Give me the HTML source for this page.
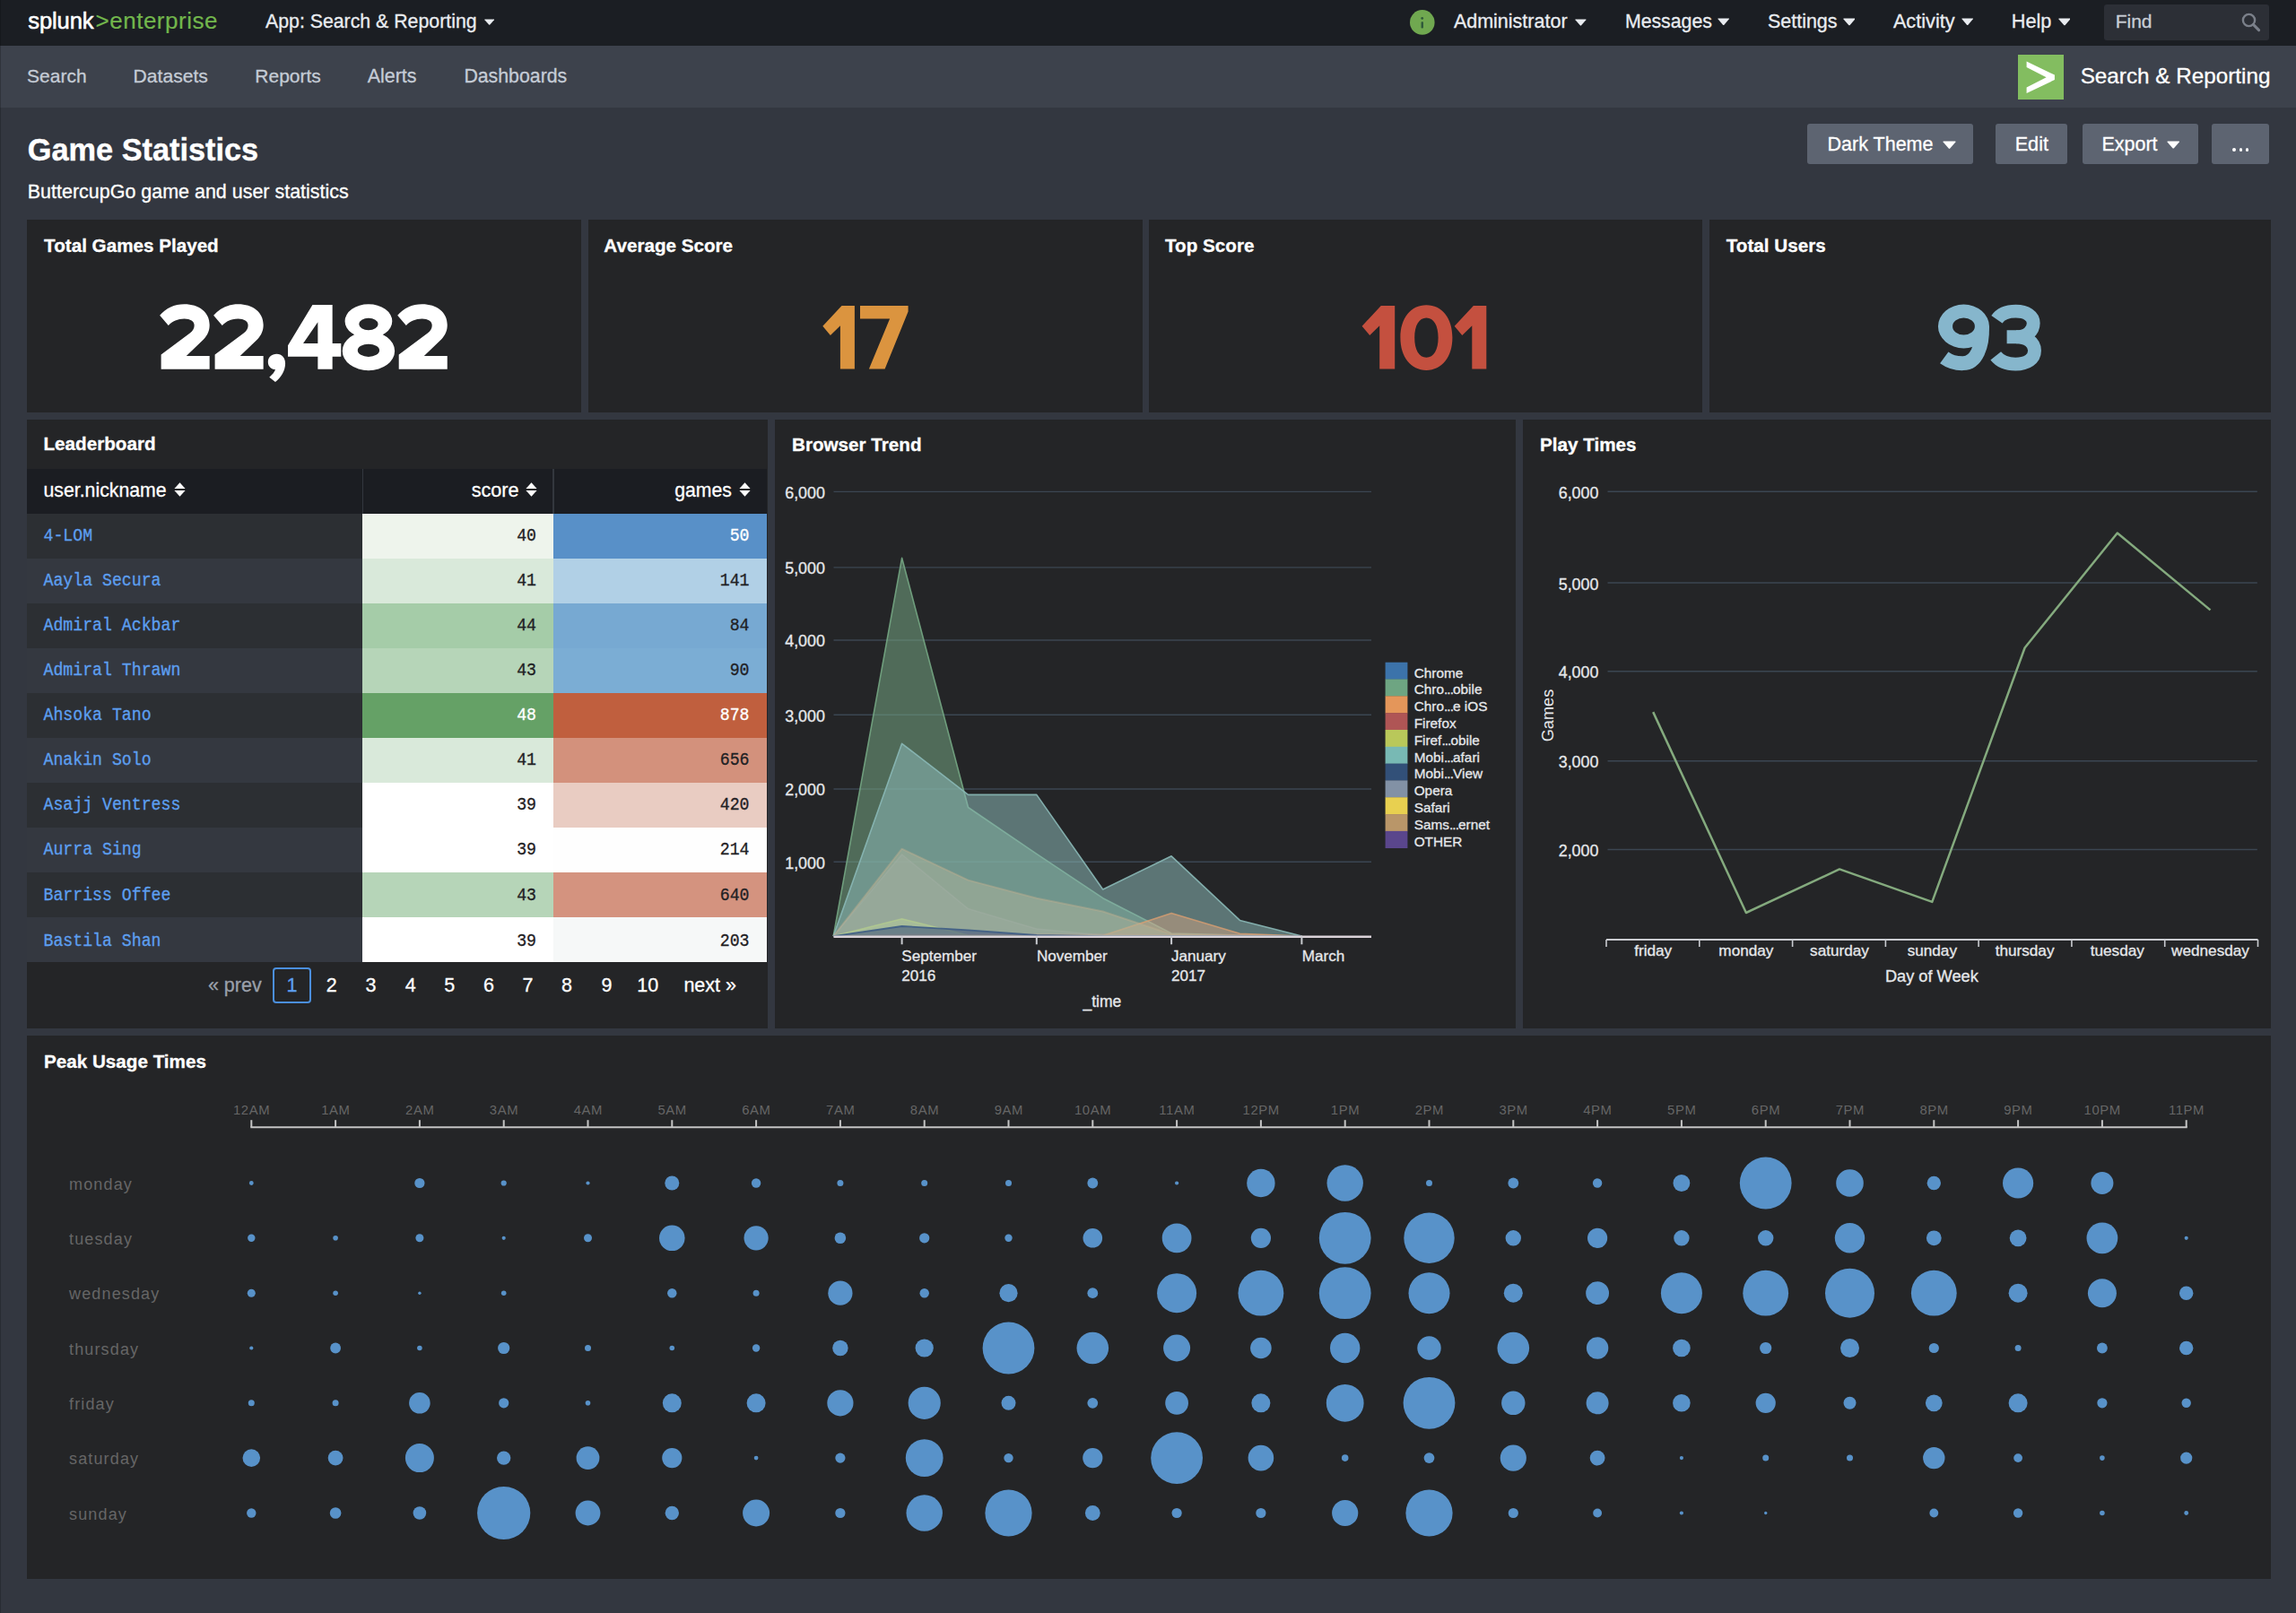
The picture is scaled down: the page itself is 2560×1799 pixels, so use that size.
<!DOCTYPE html>
<html><head><meta charset="utf-8"><title>Game Statistics</title>
<style>
html,body{margin:0;padding:0}
body{width:2560px;height:1799px;background:#333740;position:relative;overflow:hidden;font-family:"Liberation Sans", sans-serif;}
div{box-sizing:border-box}
</style></head><body>
<div style="position:absolute;left:0.0px;top:0.0px;width:2560.0px;height:51.0px;background:#1b1e23;"></div>
<div style="position:absolute;left:0.0px;top:51.0px;width:2560.0px;height:69.2px;background:#3d424c;"></div>
<div style="position:absolute;left:0.0px;top:0.0px;width:1.0px;height:1799.0px;background:rgba(0,0,0,0.2);"></div>
<div style="position:absolute;left:31.2px;top:6px;line-height:34px;font-size:26px;white-space:nowrap;letter-spacing:0.5px"><span style="color:#fff;font-size:25.6px;letter-spacing:-0.1px;-webkit-text-stroke:0.55px #fff">splunk</span><span style="color:#72b64c;margin-left:2px;-webkit-text-stroke:0.2px #72b64c">&gt;enterprise</span></div>
<div style="position:absolute;top:9.6px;line-height:28px;font-size:21.3px;color:#e9ecf0;white-space:nowrap;left:296.0px;-webkit-text-stroke:0.3px #e9ecf0;">App: Search &amp; Reporting</div>
<svg style="position:absolute;left:540.1px;top:21.1px" width="11.4" height="7.1" viewBox="0 0 10 6.2"><path d="M0.6 0.4 H9.4 Q10 0.4 9.6 1 L5.5 5.7 Q5 6.2 4.5 5.7 L0.4 1 Q0 0.4 0.6 0.4Z" fill="#e9ecf0"/></svg>
<svg style="position:absolute;left:1572.4px;top:10.5px" width="28" height="28" viewBox="0 0 28 28"><circle cx="13.8" cy="13.9" r="13.8" fill="#70a850"/><rect x="12.5" y="13.2" width="2.5" height="7.4" rx="0.8" fill="#2f5a3a"/><circle cx="13.7" cy="9.4" r="1.4" fill="#2f5a3a"/></svg>
<div style="position:absolute;top:9.6px;line-height:28px;font-size:21.5px;color:#e9ecf0;white-space:nowrap;left:1620.9px;-webkit-text-stroke:0.3px #e9ecf0;">Administrator</div>
<svg style="position:absolute;left:1756.1px;top:20.6px" width="12.9" height="8.0" viewBox="0 0 10 6.2"><path d="M0.6 0.4 H9.4 Q10 0.4 9.6 1 L5.5 5.7 Q5 6.2 4.5 5.7 L0.4 1 Q0 0.4 0.6 0.4Z" fill="#e9ecf0"/></svg>
<div style="position:absolute;top:9.6px;line-height:28px;font-size:21.3px;color:#e9ecf0;white-space:nowrap;left:1811.9px;-webkit-text-stroke:0.3px #e9ecf0;">Messages</div>
<svg style="position:absolute;left:1914.7px;top:20.4px" width="13.4" height="8.3" viewBox="0 0 10 6.2"><path d="M0.6 0.4 H9.4 Q10 0.4 9.6 1 L5.5 5.7 Q5 6.2 4.5 5.7 L0.4 1 Q0 0.4 0.6 0.4Z" fill="#e9ecf0"/></svg>
<div style="position:absolute;top:9.6px;line-height:28px;font-size:21.5px;color:#e9ecf0;white-space:nowrap;left:1970.9px;-webkit-text-stroke:0.3px #e9ecf0;">Settings</div>
<svg style="position:absolute;left:2054.6px;top:20.3px" width="13.9" height="8.6" viewBox="0 0 10 6.2"><path d="M0.6 0.4 H9.4 Q10 0.4 9.6 1 L5.5 5.7 Q5 6.2 4.5 5.7 L0.4 1 Q0 0.4 0.6 0.4Z" fill="#e9ecf0"/></svg>
<div style="position:absolute;top:9.6px;line-height:28px;font-size:21.7px;color:#e9ecf0;white-space:nowrap;left:2110.9px;-webkit-text-stroke:0.3px #e9ecf0;">Activity</div>
<svg style="position:absolute;left:2187.0px;top:20.4px" width="13.4" height="8.3" viewBox="0 0 10 6.2"><path d="M0.6 0.4 H9.4 Q10 0.4 9.6 1 L5.5 5.7 Q5 6.2 4.5 5.7 L0.4 1 Q0 0.4 0.6 0.4Z" fill="#e9ecf0"/></svg>
<div style="position:absolute;top:9.6px;line-height:28px;font-size:21.7px;color:#e9ecf0;white-space:nowrap;left:2242.8px;-webkit-text-stroke:0.3px #e9ecf0;">Help</div>
<svg style="position:absolute;left:2294.5px;top:20.3px" width="13.9" height="8.6" viewBox="0 0 10 6.2"><path d="M0.6 0.4 H9.4 Q10 0.4 9.6 1 L5.5 5.7 Q5 6.2 4.5 5.7 L0.4 1 Q0 0.4 0.6 0.4Z" fill="#e9ecf0"/></svg>
<div style="position:absolute;left:2346.0px;top:4.5px;width:184.0px;height:40.0px;background:#2c2f36;border-radius:3px;"></div>
<div style="position:absolute;top:9.6px;line-height:28px;font-size:21.0px;color:#c9ced6;white-space:nowrap;left:2358.7px;-webkit-text-stroke:0.3px #c9ced6;">Find</div>
<svg style="position:absolute;left:2497px;top:12px" width="26" height="26" viewBox="0 0 26 26"><circle cx="10.5" cy="10.5" r="6.6" fill="none" stroke="#7b808a" stroke-width="2.4"/><path d="M15.4 15.4 L21.6 21.6" stroke="#7b808a" stroke-width="3" stroke-linecap="round"/></svg>
<div style="position:absolute;top:70.6px;line-height:28px;font-size:21.0px;color:#c5ccd6;white-space:nowrap;left:30.1px;-webkit-text-stroke:0.3px #c5ccd6;">Search</div>
<div style="position:absolute;top:70.6px;line-height:28px;font-size:21.1px;color:#c5ccd6;white-space:nowrap;left:148.6px;-webkit-text-stroke:0.3px #c5ccd6;">Datasets</div>
<div style="position:absolute;top:70.6px;line-height:28px;font-size:21.0px;color:#c5ccd6;white-space:nowrap;left:284.3px;-webkit-text-stroke:0.3px #c5ccd6;">Reports</div>
<div style="position:absolute;top:70.6px;line-height:28px;font-size:21.4px;color:#c5ccd6;white-space:nowrap;left:409.8px;-webkit-text-stroke:0.3px #c5ccd6;">Alerts</div>
<div style="position:absolute;top:70.6px;line-height:28px;font-size:21.3px;color:#c5ccd6;white-space:nowrap;left:517.4px;-webkit-text-stroke:0.3px #c5ccd6;">Dashboards</div>
<div style="position:absolute;left:2250.0px;top:60.9px;width:50.8px;height:50.3px;background:#83bd60;"></div>
<svg style="position:absolute;left:2250px;top:60.9px" width="51" height="51" viewBox="0 0 51 51"><path d="M9.6 7.6 L40.9 22.6 V28 L9.6 43 V36.6 L31.6 25.3 L9.6 14.1Z" fill="#fff"/></svg>
<div style="position:absolute;top:69.3px;line-height:32px;font-size:24.28px;color:#fff;white-space:nowrap;left:2319.7px;-webkit-text-stroke:0.3px #fff;">Search &amp; Reporting</div>
<div style="position:absolute;top:145.0px;line-height:44px;font-size:34.3px;color:#fff;white-space:nowrap;font-weight:bold;left:30.8px;-webkit-text-stroke:0.4px #fff;">Game Statistics</div>
<div style="position:absolute;top:199.5px;line-height:28px;font-size:21.47px;color:#fff;white-space:nowrap;left:30.8px;-webkit-text-stroke:0.3px #fff;">ButtercupGo game and user statistics</div>
<div style="position:absolute;left:2015.4px;top:137.5px;width:185.0px;height:45.7px;background:#5d6471;border-radius:3px;"></div>
<div style="position:absolute;left:2225.2px;top:137.5px;width:80.3px;height:45.7px;background:#5d6471;border-radius:3px;"></div>
<div style="position:absolute;left:2321.9px;top:137.5px;width:128.9px;height:45.7px;background:#5d6471;border-radius:3px;"></div>
<div style="position:absolute;left:2466.2px;top:137.5px;width:64.0px;height:45.7px;background:#5d6471;border-radius:3px;"></div>
<div style="position:absolute;top:146.5px;line-height:28px;font-size:21.5px;color:#fff;white-space:nowrap;left:2037.6px;-webkit-text-stroke:0.3px #fff;">Dark Theme</div>
<svg style="position:absolute;left:2165.7px;top:156.9px" width="15.0" height="9.3" viewBox="0 0 10 6.2"><path d="M0.6 0.4 H9.4 Q10 0.4 9.6 1 L5.5 5.7 Q5 6.2 4.5 5.7 L0.4 1 Q0 0.4 0.6 0.4Z" fill="#fff"/></svg>
<div style="position:absolute;top:146.5px;line-height:28px;font-size:21.64px;color:#fff;white-space:nowrap;left:2246.7px;-webkit-text-stroke:0.3px #fff;">Edit</div>
<div style="position:absolute;top:146.5px;line-height:28px;font-size:21.52px;color:#fff;white-space:nowrap;left:2343.4px;-webkit-text-stroke:0.3px #fff;">Export</div>
<svg style="position:absolute;left:2416.1px;top:157.0px" width="14.4" height="8.9" viewBox="0 0 10 6.2"><path d="M0.6 0.4 H9.4 Q10 0.4 9.6 1 L5.5 5.7 Q5 6.2 4.5 5.7 L0.4 1 Q0 0.4 0.6 0.4Z" fill="#fff"/></svg>
<div style="position:absolute;left:2489.3px;top:165.2px;width:3.8px;height:3.8px;border-radius:50%;background:#fff"></div>
<div style="position:absolute;left:2496.5px;top:165.2px;width:3.8px;height:3.8px;border-radius:50%;background:#fff"></div>
<div style="position:absolute;left:2503.7px;top:165.2px;width:3.8px;height:3.8px;border-radius:50%;background:#fff"></div>
<div style="position:absolute;left:30.0px;top:245.0px;width:618.1px;height:215.0px;background:#242527;"></div>
<div style="position:absolute;left:655.9px;top:245.0px;width:618.0px;height:215.0px;background:#242527;"></div>
<div style="position:absolute;left:1281.4px;top:245.0px;width:617.1px;height:215.0px;background:#242527;"></div>
<div style="position:absolute;left:1905.8px;top:245.0px;width:626.4px;height:215.0px;background:#242527;"></div>
<div style="position:absolute;left:30.0px;top:467.7px;width:826.2px;height:679.4px;background:#242527;"></div>
<div style="position:absolute;left:863.7px;top:467.7px;width:826.6px;height:679.4px;background:#242527;"></div>
<div style="position:absolute;left:1698.0px;top:467.7px;width:834.2px;height:679.4px;background:#242527;"></div>
<div style="position:absolute;left:30.0px;top:1155.1px;width:2502.2px;height:605.8px;background:#242527;"></div>
<div style="position:absolute;top:261.2px;line-height:26px;font-size:20.65px;color:#fff;white-space:nowrap;font-weight:bold;left:49.1px;-webkit-text-stroke:0.3px #fff;">Total Games Played</div>
<div style="position:absolute;top:261.2px;line-height:26px;font-size:20.65px;color:#fff;white-space:nowrap;font-weight:bold;left:673.3px;-webkit-text-stroke:0.3px #fff;">Average Score</div>
<div style="position:absolute;top:261.2px;line-height:26px;font-size:20.65px;color:#fff;white-space:nowrap;font-weight:bold;left:1299.0px;-webkit-text-stroke:0.3px #fff;">Top Score</div>
<div style="position:absolute;top:261.2px;line-height:26px;font-size:20.65px;color:#fff;white-space:nowrap;font-weight:bold;left:1924.8px;-webkit-text-stroke:0.3px #fff;">Total Users</div>
<div style="position:absolute;top:481.9px;line-height:26px;font-size:20.65px;color:#fff;white-space:nowrap;font-weight:bold;left:48.5px;-webkit-text-stroke:0.3px #fff;">Leaderboard</div>
<div style="position:absolute;top:483.0px;line-height:26px;font-size:20.65px;color:#fff;white-space:nowrap;font-weight:bold;left:883.0px;-webkit-text-stroke:0.3px #fff;">Browser Trend</div>
<div style="position:absolute;top:483.0px;line-height:26px;font-size:20.65px;color:#fff;white-space:nowrap;font-weight:bold;left:1717.0px;-webkit-text-stroke:0.3px #fff;">Play Times</div>
<div style="position:absolute;top:1170.5px;line-height:26px;font-size:20.65px;color:#fff;white-space:nowrap;font-weight:bold;left:49.0px;-webkit-text-stroke:0.3px #fff;">Peak Usage Times</div>
<div style="position:absolute;left:30.0px;top:523.0px;width:824.8px;height:49.6px;background:#1b1d22;"></div>
<div style="position:absolute;left:403.5px;top:523.0px;width:1.6px;height:49.6px;background:#33373e;"></div>
<div style="position:absolute;left:616.2px;top:523.0px;width:1.6px;height:49.6px;background:#33373e;"></div>
<div style="position:absolute;top:533.2px;line-height:28px;font-size:21.28px;color:#fff;white-space:nowrap;left:48.5px;-webkit-text-stroke:0.3px #fff;">user.nickname</div>
<svg style="position:absolute;left:194.0px;top:538.4px" width="13" height="16" viewBox="0 0 13 16"><path d="M6.5 0.2 L12.6 6.9 H0.4Z M6.5 15.8 L12.6 9.1 H0.4Z" fill="#fff"/></svg>
<div style="position:absolute;top:533.2px;line-height:28px;font-size:21.67px;color:#fff;white-space:nowrap;right:1981.4px;-webkit-text-stroke:0.3px #fff;">score</div>
<svg style="position:absolute;left:586.4px;top:538.4px" width="13" height="16" viewBox="0 0 13 16"><path d="M6.5 0.2 L12.6 6.9 H0.4Z M6.5 15.8 L12.6 9.1 H0.4Z" fill="#fff"/></svg>
<div style="position:absolute;top:533.2px;line-height:28px;font-size:21.19px;color:#fff;white-space:nowrap;right:1744.2px;-webkit-text-stroke:0.3px #fff;">games</div>
<svg style="position:absolute;left:824.0px;top:538.4px" width="13" height="16" viewBox="0 0 13 16"><path d="M6.5 0.2 L12.6 6.9 H0.4Z M6.5 15.8 L12.6 9.1 H0.4Z" fill="#fff"/></svg>
<div style="position:absolute;left:30.0px;top:572.6px;width:374.3px;height:50.3px;background:#2c2f33;"></div>
<div style="position:absolute;left:404.3px;top:572.6px;width:212.7px;height:50.3px;background:#eef4ec;"></div>
<div style="position:absolute;left:617.0px;top:572.6px;width:237.8px;height:50.3px;background:#5890c8;"></div>
<div style="position:absolute;top:586.2px;line-height:24px;font-size:18.21px;color:#5d9ff0;white-space:nowrap;font-family:'Liberation Mono', monospace;left:48.5px;-webkit-text-stroke:0.3px #5d9ff0;transform:scaleY(1.1);">4-LOM</div>
<div style="position:absolute;top:586.2px;line-height:24px;font-size:18.21px;color:#1f2124;white-space:nowrap;font-family:'Liberation Mono', monospace;right:1962.0px;-webkit-text-stroke:0.3px;transform:scaleY(1.1);">40</div>
<div style="position:absolute;top:586.2px;line-height:24px;font-size:18.21px;color:#fff;white-space:nowrap;font-family:'Liberation Mono', monospace;right:1724.5px;-webkit-text-stroke:0.3px;transform:scaleY(1.1);">50</div>
<div style="position:absolute;left:30.0px;top:622.6px;width:374.3px;height:50.3px;background:#343840;"></div>
<div style="position:absolute;left:404.3px;top:622.6px;width:212.7px;height:50.3px;background:#d9e9da;"></div>
<div style="position:absolute;left:617.0px;top:622.6px;width:237.8px;height:50.3px;background:#b1d0e6;"></div>
<div style="position:absolute;top:636.2px;line-height:24px;font-size:18.21px;color:#5d9ff0;white-space:nowrap;font-family:'Liberation Mono', monospace;left:48.5px;-webkit-text-stroke:0.3px #5d9ff0;transform:scaleY(1.1);">Aayla Secura</div>
<div style="position:absolute;top:636.2px;line-height:24px;font-size:18.21px;color:#1f2124;white-space:nowrap;font-family:'Liberation Mono', monospace;right:1962.0px;-webkit-text-stroke:0.3px;transform:scaleY(1.1);">41</div>
<div style="position:absolute;top:636.2px;line-height:24px;font-size:18.21px;color:#1f2124;white-space:nowrap;font-family:'Liberation Mono', monospace;right:1724.5px;-webkit-text-stroke:0.3px;transform:scaleY(1.1);">141</div>
<div style="position:absolute;left:30.0px;top:672.7px;width:374.3px;height:50.3px;background:#2c2f33;"></div>
<div style="position:absolute;left:404.3px;top:672.7px;width:212.7px;height:50.3px;background:#a5cca8;"></div>
<div style="position:absolute;left:617.0px;top:672.7px;width:237.8px;height:50.3px;background:#77a9d2;"></div>
<div style="position:absolute;top:686.3px;line-height:24px;font-size:18.21px;color:#5d9ff0;white-space:nowrap;font-family:'Liberation Mono', monospace;left:48.5px;-webkit-text-stroke:0.3px #5d9ff0;transform:scaleY(1.1);">Admiral Ackbar</div>
<div style="position:absolute;top:686.3px;line-height:24px;font-size:18.21px;color:#1f2124;white-space:nowrap;font-family:'Liberation Mono', monospace;right:1962.0px;-webkit-text-stroke:0.3px;transform:scaleY(1.1);">44</div>
<div style="position:absolute;top:686.3px;line-height:24px;font-size:18.21px;color:#1f2124;white-space:nowrap;font-family:'Liberation Mono', monospace;right:1724.5px;-webkit-text-stroke:0.3px;transform:scaleY(1.1);">84</div>
<div style="position:absolute;left:30.0px;top:722.7px;width:374.3px;height:50.3px;background:#343840;"></div>
<div style="position:absolute;left:404.3px;top:722.7px;width:212.7px;height:50.3px;background:#b6d5b8;"></div>
<div style="position:absolute;left:617.0px;top:722.7px;width:237.8px;height:50.3px;background:#7badd4;"></div>
<div style="position:absolute;top:736.3px;line-height:24px;font-size:18.21px;color:#5d9ff0;white-space:nowrap;font-family:'Liberation Mono', monospace;left:48.5px;-webkit-text-stroke:0.3px #5d9ff0;transform:scaleY(1.1);">Admiral Thrawn</div>
<div style="position:absolute;top:736.3px;line-height:24px;font-size:18.21px;color:#1f2124;white-space:nowrap;font-family:'Liberation Mono', monospace;right:1962.0px;-webkit-text-stroke:0.3px;transform:scaleY(1.1);">43</div>
<div style="position:absolute;top:736.3px;line-height:24px;font-size:18.21px;color:#1f2124;white-space:nowrap;font-family:'Liberation Mono', monospace;right:1724.5px;-webkit-text-stroke:0.3px;transform:scaleY(1.1);">90</div>
<div style="position:absolute;left:30.0px;top:772.7px;width:374.3px;height:50.3px;background:#2c2f33;"></div>
<div style="position:absolute;left:404.3px;top:772.7px;width:212.7px;height:50.3px;background:#65a166;"></div>
<div style="position:absolute;left:617.0px;top:772.7px;width:237.8px;height:50.3px;background:#c05f3e;"></div>
<div style="position:absolute;top:786.3px;line-height:24px;font-size:18.21px;color:#5d9ff0;white-space:nowrap;font-family:'Liberation Mono', monospace;left:48.5px;-webkit-text-stroke:0.3px #5d9ff0;transform:scaleY(1.1);">Ahsoka Tano</div>
<div style="position:absolute;top:786.3px;line-height:24px;font-size:18.21px;color:#fff;white-space:nowrap;font-family:'Liberation Mono', monospace;right:1962.0px;-webkit-text-stroke:0.3px;transform:scaleY(1.1);">48</div>
<div style="position:absolute;top:786.3px;line-height:24px;font-size:18.21px;color:#fff;white-space:nowrap;font-family:'Liberation Mono', monospace;right:1724.5px;-webkit-text-stroke:0.3px;transform:scaleY(1.1);">878</div>
<div style="position:absolute;left:30.0px;top:822.8px;width:374.3px;height:50.3px;background:#343840;"></div>
<div style="position:absolute;left:404.3px;top:822.8px;width:212.7px;height:50.3px;background:#d9e9da;"></div>
<div style="position:absolute;left:617.0px;top:822.8px;width:237.8px;height:50.3px;background:#d3917c;"></div>
<div style="position:absolute;top:836.4px;line-height:24px;font-size:18.21px;color:#5d9ff0;white-space:nowrap;font-family:'Liberation Mono', monospace;left:48.5px;-webkit-text-stroke:0.3px #5d9ff0;transform:scaleY(1.1);">Anakin Solo</div>
<div style="position:absolute;top:836.4px;line-height:24px;font-size:18.21px;color:#1f2124;white-space:nowrap;font-family:'Liberation Mono', monospace;right:1962.0px;-webkit-text-stroke:0.3px;transform:scaleY(1.1);">41</div>
<div style="position:absolute;top:836.4px;line-height:24px;font-size:18.21px;color:#1f2124;white-space:nowrap;font-family:'Liberation Mono', monospace;right:1724.5px;-webkit-text-stroke:0.3px;transform:scaleY(1.1);">656</div>
<div style="position:absolute;left:30.0px;top:872.8px;width:374.3px;height:50.3px;background:#2c2f33;"></div>
<div style="position:absolute;left:404.3px;top:872.8px;width:212.7px;height:50.3px;background:#ffffff;"></div>
<div style="position:absolute;left:617.0px;top:872.8px;width:237.8px;height:50.3px;background:#e9ccc2;"></div>
<div style="position:absolute;top:886.4px;line-height:24px;font-size:18.21px;color:#5d9ff0;white-space:nowrap;font-family:'Liberation Mono', monospace;left:48.5px;-webkit-text-stroke:0.3px #5d9ff0;transform:scaleY(1.1);">Asajj Ventress</div>
<div style="position:absolute;top:886.4px;line-height:24px;font-size:18.21px;color:#1f2124;white-space:nowrap;font-family:'Liberation Mono', monospace;right:1962.0px;-webkit-text-stroke:0.3px;transform:scaleY(1.1);">39</div>
<div style="position:absolute;top:886.4px;line-height:24px;font-size:18.21px;color:#1f2124;white-space:nowrap;font-family:'Liberation Mono', monospace;right:1724.5px;-webkit-text-stroke:0.3px;transform:scaleY(1.1);">420</div>
<div style="position:absolute;left:30.0px;top:922.8px;width:374.3px;height:50.3px;background:#343840;"></div>
<div style="position:absolute;left:404.3px;top:922.8px;width:212.7px;height:50.3px;background:#ffffff;"></div>
<div style="position:absolute;left:617.0px;top:922.8px;width:237.8px;height:50.3px;background:#fefefe;"></div>
<div style="position:absolute;top:936.4px;line-height:24px;font-size:18.21px;color:#5d9ff0;white-space:nowrap;font-family:'Liberation Mono', monospace;left:48.5px;-webkit-text-stroke:0.3px #5d9ff0;transform:scaleY(1.1);">Aurra Sing</div>
<div style="position:absolute;top:936.4px;line-height:24px;font-size:18.21px;color:#1f2124;white-space:nowrap;font-family:'Liberation Mono', monospace;right:1962.0px;-webkit-text-stroke:0.3px;transform:scaleY(1.1);">39</div>
<div style="position:absolute;top:936.4px;line-height:24px;font-size:18.21px;color:#1f2124;white-space:nowrap;font-family:'Liberation Mono', monospace;right:1724.5px;-webkit-text-stroke:0.3px;transform:scaleY(1.1);">214</div>
<div style="position:absolute;left:30.0px;top:972.8px;width:374.3px;height:50.3px;background:#2c2f33;"></div>
<div style="position:absolute;left:404.3px;top:972.8px;width:212.7px;height:50.3px;background:#b6d5b8;"></div>
<div style="position:absolute;left:617.0px;top:972.8px;width:237.8px;height:50.3px;background:#d4937f;"></div>
<div style="position:absolute;top:986.5px;line-height:24px;font-size:18.21px;color:#5d9ff0;white-space:nowrap;font-family:'Liberation Mono', monospace;left:48.5px;-webkit-text-stroke:0.3px #5d9ff0;transform:scaleY(1.1);">Barriss Offee</div>
<div style="position:absolute;top:986.5px;line-height:24px;font-size:18.21px;color:#1f2124;white-space:nowrap;font-family:'Liberation Mono', monospace;right:1962.0px;-webkit-text-stroke:0.3px;transform:scaleY(1.1);">43</div>
<div style="position:absolute;top:986.5px;line-height:24px;font-size:18.21px;color:#1f2124;white-space:nowrap;font-family:'Liberation Mono', monospace;right:1724.5px;-webkit-text-stroke:0.3px;transform:scaleY(1.1);">640</div>
<div style="position:absolute;left:30.0px;top:1022.9px;width:374.3px;height:50.3px;background:#343840;"></div>
<div style="position:absolute;left:404.3px;top:1022.9px;width:212.7px;height:50.3px;background:#ffffff;"></div>
<div style="position:absolute;left:617.0px;top:1022.9px;width:237.8px;height:50.3px;background:#f6f8f8;"></div>
<div style="position:absolute;top:1036.5px;line-height:24px;font-size:18.21px;color:#5d9ff0;white-space:nowrap;font-family:'Liberation Mono', monospace;left:48.5px;-webkit-text-stroke:0.3px #5d9ff0;transform:scaleY(1.1);">Bastila Shan</div>
<div style="position:absolute;top:1036.5px;line-height:24px;font-size:18.21px;color:#1f2124;white-space:nowrap;font-family:'Liberation Mono', monospace;right:1962.0px;-webkit-text-stroke:0.3px;transform:scaleY(1.1);">39</div>
<div style="position:absolute;top:1036.5px;line-height:24px;font-size:18.21px;color:#1f2124;white-space:nowrap;font-family:'Liberation Mono', monospace;right:1724.5px;-webkit-text-stroke:0.3px;transform:scaleY(1.1);">203</div>
<div style="position:absolute;top:1085.0px;line-height:28px;font-size:21.5px;color:#9aa0aa;white-space:nowrap;left:231.9px;-webkit-text-stroke:0.3px #9aa0aa;">« prev</div>
<div style="position:absolute;left:304px;top:1078.5px;width:43px;height:40px;border:2px solid #4b8fdd;border-radius:4px"></div>
<div style="position:absolute;top:1085.0px;line-height:28px;font-size:21.5px;color:#5d9ff0;white-space:nowrap;left:325.5px;transform:translateX(-50%);-webkit-text-stroke:0.3px #5d9ff0;">1</div>
<div style="position:absolute;top:1085.0px;line-height:28px;font-size:21.5px;color:#fff;white-space:nowrap;left:369.8px;transform:translateX(-50%);-webkit-text-stroke:0.3px #fff;">2</div>
<div style="position:absolute;top:1085.0px;line-height:28px;font-size:21.5px;color:#fff;white-space:nowrap;left:413.4px;transform:translateX(-50%);-webkit-text-stroke:0.3px #fff;">3</div>
<div style="position:absolute;top:1085.0px;line-height:28px;font-size:21.5px;color:#fff;white-space:nowrap;left:457.8px;transform:translateX(-50%);-webkit-text-stroke:0.3px #fff;">4</div>
<div style="position:absolute;top:1085.0px;line-height:28px;font-size:21.5px;color:#fff;white-space:nowrap;left:501.3px;transform:translateX(-50%);-webkit-text-stroke:0.3px #fff;">5</div>
<div style="position:absolute;top:1085.0px;line-height:28px;font-size:21.5px;color:#fff;white-space:nowrap;left:544.9px;transform:translateX(-50%);-webkit-text-stroke:0.3px #fff;">6</div>
<div style="position:absolute;top:1085.0px;line-height:28px;font-size:21.5px;color:#fff;white-space:nowrap;left:588.5px;transform:translateX(-50%);-webkit-text-stroke:0.3px #fff;">7</div>
<div style="position:absolute;top:1085.0px;line-height:28px;font-size:21.5px;color:#fff;white-space:nowrap;left:632.1px;transform:translateX(-50%);-webkit-text-stroke:0.3px #fff;">8</div>
<div style="position:absolute;top:1085.0px;line-height:28px;font-size:21.5px;color:#fff;white-space:nowrap;left:676.4px;transform:translateX(-50%);-webkit-text-stroke:0.3px #fff;">9</div>
<div style="position:absolute;top:1085.0px;line-height:28px;font-size:21.5px;color:#fff;white-space:nowrap;left:722.2px;transform:translateX(-50%);-webkit-text-stroke:0.3px #fff;">10</div>
<div style="position:absolute;top:1085.0px;line-height:28px;font-size:21.5px;color:#fff;white-space:nowrap;left:762.4px;-webkit-text-stroke:0.3px #fff;">next »</div>
<svg style="position:absolute;left:0;top:0" width="2560" height="1799" viewBox="0 0 2560 1799"><line x1="929.5" x2="1529" y1="961.2" y2="961.2" stroke="#3b4652" stroke-width="1.4"/><line x1="929.5" x2="1529" y1="880.0" y2="880.0" stroke="#3b4652" stroke-width="1.4"/><line x1="929.5" x2="1529" y1="797.2" y2="797.2" stroke="#3b4652" stroke-width="1.4"/><line x1="929.5" x2="1529" y1="714.0" y2="714.0" stroke="#3b4652" stroke-width="1.4"/><line x1="929.5" x2="1529" y1="632.9" y2="632.9" stroke="#3b4652" stroke-width="1.4"/><line x1="929.5" x2="1529" y1="548.4" y2="548.4" stroke="#3b4652" stroke-width="1.4"/><polygon points="929.2,1044.1 929.2,1044.1 1005.6,1043.1 1079.5,1043.1 1155.8,1043.1 1229.7,1043.1 1306.1,1043.1 1382.4,1043.1 1451.4,1044.1 1451.4,1044.1" fill="#3d6ea5" fill-opacity="0.55"/><polyline points="929.2,1044.1 1005.6,1043.1 1079.5,1043.1 1155.8,1043.1 1229.7,1043.1 1306.1,1043.1 1382.4,1043.1 1451.4,1044.1" fill="none" stroke="#3d6ea5" stroke-opacity="0.9" stroke-width="1.6" stroke-linejoin="round"/><polygon points="929.2,1044.1 929.2,1044.1 1005.6,622.3 1079.5,900.5 1155.8,952.4 1229.7,1001.7 1306.1,1041.0 1382.4,1043.0 1451.4,1044.1 1451.4,1044.1" fill="#74a683" fill-opacity="0.55"/><polyline points="929.2,1044.1 1005.6,622.3 1079.5,900.5 1155.8,952.4 1229.7,1001.7 1306.1,1041.0 1382.4,1043.0 1451.4,1044.1" fill="none" stroke="#74a683" stroke-opacity="0.9" stroke-width="1.6" stroke-linejoin="round"/><polygon points="929.2,1044.1 929.2,1044.1 1005.6,1042.1 1079.5,1042.1 1155.8,1042.1 1229.7,1042.1 1306.1,1043.1 1382.4,1043.1 1451.4,1044.1 1451.4,1044.1" fill="#b05a5a" fill-opacity="0.5"/><polyline points="929.2,1044.1 1005.6,1042.1 1079.5,1042.1 1155.8,1042.1 1229.7,1042.1 1306.1,1043.1 1382.4,1043.1 1451.4,1044.1" fill="none" stroke="#b05a5a" stroke-opacity="0.9" stroke-width="1.6" stroke-linejoin="round"/><polygon points="929.2,1044.1 929.2,1044.1 1005.6,1024.8 1079.5,1043.0 1155.8,1044.1 1229.7,1044.1 1306.1,1044.1 1382.4,1044.1 1451.4,1044.1 1451.4,1044.1" fill="#bccb5c" fill-opacity="0.5"/><polyline points="929.2,1044.1 1005.6,1024.8 1079.5,1043.0 1155.8,1044.1 1229.7,1044.1 1306.1,1044.1 1382.4,1044.1 1451.4,1044.1" fill="none" stroke="#bccb5c" stroke-opacity="0.9" stroke-width="1.6" stroke-linejoin="round"/><polygon points="929.2,1044.1 929.2,1044.1 1005.6,829.3 1079.5,886.4 1155.8,886.4 1229.7,992.0 1306.1,954.8 1382.4,1026.4 1451.4,1044.1 1451.4,1044.1" fill="#8ab8b6" fill-opacity="0.55"/><polyline points="929.2,1044.1 1005.6,829.3 1079.5,886.4 1155.8,886.4 1229.7,992.0 1306.1,954.8 1382.4,1026.4 1451.4,1044.1" fill="none" stroke="#8ab8b6" stroke-opacity="0.9" stroke-width="1.6" stroke-linejoin="round"/><polygon points="929.2,1044.1 929.2,1044.1 1005.6,1042.6 1079.5,1042.6 1155.8,1043.1 1229.7,1043.6 1306.1,1018.4 1382.4,1041.3 1451.4,1044.1 1451.4,1044.1" fill="#e6ab82" fill-opacity="0.42"/><polyline points="929.2,1044.1 1005.6,1042.6 1079.5,1042.6 1155.8,1043.1 1229.7,1043.6 1306.1,1018.4 1382.4,1041.3 1451.4,1044.1" fill="none" stroke="#e0a070" stroke-opacity="0.75" stroke-width="1.6" stroke-linejoin="round"/><polygon points="929.2,1044.1 929.2,1044.1 1005.6,953.0 1079.5,1013.6 1155.8,1036.0 1229.7,1043.0 1306.1,1044.1 1382.4,1044.1 1451.4,1044.1 1451.4,1044.1" fill="#a9b4bf" fill-opacity="0.22"/><polyline points="929.2,1044.1 1005.6,953.0 1079.5,1013.6 1155.8,1036.0 1229.7,1043.0 1306.1,1044.1 1382.4,1044.1 1451.4,1044.1" fill="none" stroke="#a9b4bf" stroke-opacity="0.3" stroke-width="1.6" stroke-linejoin="round"/><polygon points="929.2,1044.1 929.2,1044.1 1005.6,946.7 1079.5,981.6 1155.8,1001.8 1229.7,1016.5 1306.1,1042.0 1382.4,1044.1 1451.4,1044.1 1451.4,1044.1" fill="#acb39b" fill-opacity="0.55"/><polyline points="929.2,1044.1 1005.6,946.7 1079.5,981.6 1155.8,1001.8 1229.7,1016.5 1306.1,1042.0 1382.4,1044.1 1451.4,1044.1" fill="none" stroke="#c4ae8e" stroke-opacity="0.4" stroke-width="2" stroke-linejoin="round"/><polygon points="929.2,1044.1 929.2,1044.1 1005.6,1024.8 1079.5,1043.0 1155.8,1044.1 1229.7,1044.1 1306.1,1044.1 1382.4,1044.1 1451.4,1044.1 1451.4,1044.1" fill="#c5e09a" fill-opacity="0.24"/><polyline points="929.2,1044.1 1005.6,1024.8 1079.5,1043.0 1155.8,1044.1 1229.7,1044.1 1306.1,1044.1 1382.4,1044.1 1451.4,1044.1" fill="none" stroke="#b9e07a" stroke-opacity="0.3" stroke-width="1.2" stroke-linejoin="round"/><polygon points="929.2,1044.1 929.2,1044.1 1005.6,1033.0 1079.5,1037.3 1155.8,1043.0 1229.7,1044.1 1306.1,1044.1 1382.4,1044.1 1451.4,1044.1 1451.4,1044.1" fill="#2e4478" fill-opacity="0.5"/><polyline points="929.2,1044.1 1005.6,1033.0 1079.5,1037.3 1155.8,1043.0 1229.7,1044.1 1306.1,1044.1 1382.4,1044.1 1451.4,1044.1" fill="none" stroke="#3b5a85" stroke-opacity="0.85" stroke-width="1.8" stroke-linejoin="round"/><line x1="929.5" x2="1529" y1="1044.6999999999998" y2="1044.6999999999998" stroke="#d9d2d8" stroke-width="2.4"/><line x1="1005.6" x2="1005.6" y1="1044.1" y2="1053.3" stroke="#c9cbd0" stroke-width="2"/><line x1="1155.8" x2="1155.8" y1="1044.1" y2="1053.3" stroke="#c9cbd0" stroke-width="2"/><line x1="1306.1" x2="1306.1" y1="1044.1" y2="1053.3" stroke="#c9cbd0" stroke-width="2"/><line x1="1451.4" x2="1451.4" y1="1044.1" y2="1053.3" stroke="#c9cbd0" stroke-width="2"/><rect x="1544.6" y="738.70" width="24.8" height="19.12" fill="#3c73aa"/><rect x="1544.6" y="757.52" width="24.8" height="19.12" fill="#6ea582"/><rect x="1544.6" y="776.34" width="24.8" height="19.12" fill="#e4965a"/><rect x="1544.6" y="795.16" width="24.8" height="19.12" fill="#af5555"/><rect x="1544.6" y="813.98" width="24.8" height="19.12" fill="#b9c85a"/><rect x="1544.6" y="832.80" width="24.8" height="19.12" fill="#78b9b4"/><rect x="1544.6" y="851.62" width="24.8" height="19.12" fill="#325078"/><rect x="1544.6" y="870.44" width="24.8" height="19.12" fill="#8291a5"/><rect x="1544.6" y="889.26" width="24.8" height="19.12" fill="#e8d050"/><rect x="1544.6" y="908.08" width="24.8" height="19.12" fill="#b99669"/><rect x="1544.6" y="926.90" width="24.8" height="19.12" fill="#5a468c"/><line x1="1792.5" x2="2516.8" y1="548.3" y2="548.3" stroke="#3b4652" stroke-width="1.4"/><line x1="1792.5" x2="2516.8" y1="650" y2="650" stroke="#3b4652" stroke-width="1.4"/><line x1="1792.5" x2="2516.8" y1="748.8" y2="748.8" stroke="#3b4652" stroke-width="1.4"/><line x1="1792.5" x2="2516.8" y1="848.8" y2="848.8" stroke="#3b4652" stroke-width="1.4"/><line x1="1792.5" x2="2516.8" y1="947.5" y2="947.5" stroke="#3b4652" stroke-width="1.4"/><line x1="1791" x2="2517.5" y1="1048" y2="1048" stroke="#c9cbd0" stroke-width="2"/><line x1="1791.0" x2="1791.0" y1="1048" y2="1056" stroke="#c9cbd0" stroke-width="1.6"/><line x1="1894.8" x2="1894.8" y1="1048" y2="1056" stroke="#c9cbd0" stroke-width="1.6"/><line x1="1998.6" x2="1998.6" y1="1048" y2="1056" stroke="#c9cbd0" stroke-width="1.6"/><line x1="2102.4" x2="2102.4" y1="1048" y2="1056" stroke="#c9cbd0" stroke-width="1.6"/><line x1="2206.1" x2="2206.1" y1="1048" y2="1056" stroke="#c9cbd0" stroke-width="1.6"/><line x1="2309.9" x2="2309.9" y1="1048" y2="1056" stroke="#c9cbd0" stroke-width="1.6"/><line x1="2413.7" x2="2413.7" y1="1048" y2="1056" stroke="#c9cbd0" stroke-width="1.6"/><line x1="2517.5" x2="2517.5" y1="1048" y2="1056" stroke="#c9cbd0" stroke-width="1.6"/><polyline points="1843.2,794.1 1946.9,1018 2051,969.4 2154.3,1005.9 2257.6,722.5 2360.8,594.5 2464.5,680.4" fill="none" stroke="#84aa7e" stroke-width="2.5" stroke-linejoin="round"/><line x1="279.3" x2="2438.7" y1="1257.2" y2="1257.2" stroke="#c4c4c4" stroke-width="2"/><line x1="280.3" x2="280.3" y1="1249.2" y2="1257.2" stroke="#c4c4c4" stroke-width="2"/><line x1="374.1" x2="374.1" y1="1249.2" y2="1257.2" stroke="#c4c4c4" stroke-width="2"/><line x1="467.9" x2="467.9" y1="1249.2" y2="1257.2" stroke="#c4c4c4" stroke-width="2"/><line x1="561.7" x2="561.7" y1="1249.2" y2="1257.2" stroke="#c4c4c4" stroke-width="2"/><line x1="655.5" x2="655.5" y1="1249.2" y2="1257.2" stroke="#c4c4c4" stroke-width="2"/><line x1="749.3" x2="749.3" y1="1249.2" y2="1257.2" stroke="#c4c4c4" stroke-width="2"/><line x1="843.1" x2="843.1" y1="1249.2" y2="1257.2" stroke="#c4c4c4" stroke-width="2"/><line x1="936.9" x2="936.9" y1="1249.2" y2="1257.2" stroke="#c4c4c4" stroke-width="2"/><line x1="1030.7" x2="1030.7" y1="1249.2" y2="1257.2" stroke="#c4c4c4" stroke-width="2"/><line x1="1124.5" x2="1124.5" y1="1249.2" y2="1257.2" stroke="#c4c4c4" stroke-width="2"/><line x1="1218.3" x2="1218.3" y1="1249.2" y2="1257.2" stroke="#c4c4c4" stroke-width="2"/><line x1="1312.1" x2="1312.1" y1="1249.2" y2="1257.2" stroke="#c4c4c4" stroke-width="2"/><line x1="1405.9" x2="1405.9" y1="1249.2" y2="1257.2" stroke="#c4c4c4" stroke-width="2"/><line x1="1499.7" x2="1499.7" y1="1249.2" y2="1257.2" stroke="#c4c4c4" stroke-width="2"/><line x1="1593.5" x2="1593.5" y1="1249.2" y2="1257.2" stroke="#c4c4c4" stroke-width="2"/><line x1="1687.3" x2="1687.3" y1="1249.2" y2="1257.2" stroke="#c4c4c4" stroke-width="2"/><line x1="1781.1" x2="1781.1" y1="1249.2" y2="1257.2" stroke="#c4c4c4" stroke-width="2"/><line x1="1874.9" x2="1874.9" y1="1249.2" y2="1257.2" stroke="#c4c4c4" stroke-width="2"/><line x1="1968.7" x2="1968.7" y1="1249.2" y2="1257.2" stroke="#c4c4c4" stroke-width="2"/><line x1="2062.5" x2="2062.5" y1="1249.2" y2="1257.2" stroke="#c4c4c4" stroke-width="2"/><line x1="2156.3" x2="2156.3" y1="1249.2" y2="1257.2" stroke="#c4c4c4" stroke-width="2"/><line x1="2250.1" x2="2250.1" y1="1249.2" y2="1257.2" stroke="#c4c4c4" stroke-width="2"/><line x1="2343.9" x2="2343.9" y1="1249.2" y2="1257.2" stroke="#c4c4c4" stroke-width="2"/><line x1="2437.7" x2="2437.7" y1="1249.2" y2="1257.2" stroke="#c4c4c4" stroke-width="2"/><circle cx="280.3" cy="1319.5" r="2.4" fill="#5892c9"/><circle cx="467.9" cy="1319.5" r="5.6" fill="#5892c9"/><circle cx="561.7" cy="1319.5" r="3.1" fill="#5892c9"/><circle cx="655.5" cy="1319.5" r="2.1" fill="#5892c9"/><circle cx="749.3" cy="1319.5" r="8" fill="#5892c9"/><circle cx="843.1" cy="1319.5" r="5.2" fill="#5892c9"/><circle cx="936.9" cy="1319.5" r="3.5" fill="#5892c9"/><circle cx="1030.7" cy="1319.5" r="3.5" fill="#5892c9"/><circle cx="1124.5" cy="1319.5" r="3.5" fill="#5892c9"/><circle cx="1218.3" cy="1319.5" r="5.9" fill="#5892c9"/><circle cx="1312.1" cy="1319.5" r="2.1" fill="#5892c9"/><circle cx="1405.9" cy="1319.5" r="15.7" fill="#5892c9"/><circle cx="1499.7" cy="1319.5" r="20.2" fill="#5892c9"/><circle cx="1593.5" cy="1319.5" r="3.5" fill="#5892c9"/><circle cx="1687.3" cy="1319.5" r="5.9" fill="#5892c9"/><circle cx="1781.1" cy="1319.5" r="5.2" fill="#5892c9"/><circle cx="1874.9" cy="1319.5" r="9.4" fill="#5892c9"/><circle cx="1968.7" cy="1319.5" r="28.9" fill="#5892c9"/><circle cx="2062.5" cy="1319.5" r="15.3" fill="#5892c9"/><circle cx="2156.3" cy="1319.5" r="7.7" fill="#5892c9"/><circle cx="2250.1" cy="1319.5" r="17.1" fill="#5892c9"/><circle cx="2343.9" cy="1319.5" r="12.5" fill="#5892c9"/><circle cx="280.3" cy="1380.8" r="4.2" fill="#5892c9"/><circle cx="374.1" cy="1380.8" r="2.8" fill="#5892c9"/><circle cx="467.9" cy="1380.8" r="4.5" fill="#5892c9"/><circle cx="561.7" cy="1380.8" r="2.1" fill="#5892c9"/><circle cx="655.5" cy="1380.8" r="4.5" fill="#5892c9"/><circle cx="749.3" cy="1380.8" r="14.3" fill="#5892c9"/><circle cx="843.1" cy="1380.8" r="13.6" fill="#5892c9"/><circle cx="936.9" cy="1380.8" r="6.3" fill="#5892c9"/><circle cx="1030.7" cy="1380.8" r="5.6" fill="#5892c9"/><circle cx="1124.5" cy="1380.8" r="4.2" fill="#5892c9"/><circle cx="1218.3" cy="1380.8" r="10.8" fill="#5892c9"/><circle cx="1312.1" cy="1380.8" r="16.4" fill="#5892c9"/><circle cx="1405.9" cy="1380.8" r="11.1" fill="#5892c9"/><circle cx="1499.7" cy="1380.8" r="28.9" fill="#5892c9"/><circle cx="1593.5" cy="1380.8" r="28.2" fill="#5892c9"/><circle cx="1687.3" cy="1380.8" r="8.7" fill="#5892c9"/><circle cx="1781.1" cy="1380.8" r="11.1" fill="#5892c9"/><circle cx="1874.9" cy="1380.8" r="8.7" fill="#5892c9"/><circle cx="1968.7" cy="1380.8" r="8.7" fill="#5892c9"/><circle cx="2062.5" cy="1380.8" r="16.7" fill="#5892c9"/><circle cx="2156.3" cy="1380.8" r="8.4" fill="#5892c9"/><circle cx="2250.1" cy="1380.8" r="9.4" fill="#5892c9"/><circle cx="2343.9" cy="1380.8" r="17.4" fill="#5892c9"/><circle cx="2437.7" cy="1380.8" r="2.1" fill="#5892c9"/><circle cx="280.3" cy="1442.2" r="4.5" fill="#5892c9"/><circle cx="374.1" cy="1442.2" r="2.8" fill="#5892c9"/><circle cx="467.9" cy="1442.2" r="1.7" fill="#5892c9"/><circle cx="561.7" cy="1442.2" r="2.8" fill="#5892c9"/><circle cx="749.3" cy="1442.2" r="5.2" fill="#5892c9"/><circle cx="843.1" cy="1442.2" r="3.5" fill="#5892c9"/><circle cx="936.9" cy="1442.2" r="13.6" fill="#5892c9"/><circle cx="1030.7" cy="1442.2" r="5.2" fill="#5892c9"/><circle cx="1124.5" cy="1442.2" r="10.1" fill="#5892c9"/><circle cx="1218.3" cy="1442.2" r="5.9" fill="#5892c9"/><circle cx="1312.1" cy="1442.2" r="22" fill="#5892c9"/><circle cx="1405.9" cy="1442.2" r="25.4" fill="#5892c9"/><circle cx="1499.7" cy="1442.2" r="28.9" fill="#5892c9"/><circle cx="1593.5" cy="1442.2" r="23" fill="#5892c9"/><circle cx="1687.3" cy="1442.2" r="10.5" fill="#5892c9"/><circle cx="1781.1" cy="1442.2" r="12.9" fill="#5892c9"/><circle cx="1874.9" cy="1442.2" r="23" fill="#5892c9"/><circle cx="1968.7" cy="1442.2" r="25.4" fill="#5892c9"/><circle cx="2062.5" cy="1442.2" r="27.5" fill="#5892c9"/><circle cx="2156.3" cy="1442.2" r="25.4" fill="#5892c9"/><circle cx="2250.1" cy="1442.2" r="10.5" fill="#5892c9"/><circle cx="2343.9" cy="1442.2" r="16" fill="#5892c9"/><circle cx="2437.7" cy="1442.2" r="7.7" fill="#5892c9"/><circle cx="280.3" cy="1503.5" r="2.1" fill="#5892c9"/><circle cx="374.1" cy="1503.5" r="5.9" fill="#5892c9"/><circle cx="467.9" cy="1503.5" r="2.8" fill="#5892c9"/><circle cx="561.7" cy="1503.5" r="6.6" fill="#5892c9"/><circle cx="655.5" cy="1503.5" r="3.5" fill="#5892c9"/><circle cx="749.3" cy="1503.5" r="2.8" fill="#5892c9"/><circle cx="843.1" cy="1503.5" r="4.2" fill="#5892c9"/><circle cx="936.9" cy="1503.5" r="8.7" fill="#5892c9"/><circle cx="1030.7" cy="1503.5" r="10.1" fill="#5892c9"/><circle cx="1124.5" cy="1503.5" r="28.9" fill="#5892c9"/><circle cx="1218.3" cy="1503.5" r="17.8" fill="#5892c9"/><circle cx="1312.1" cy="1503.5" r="15" fill="#5892c9"/><circle cx="1405.9" cy="1503.5" r="11.8" fill="#5892c9"/><circle cx="1499.7" cy="1503.5" r="16.7" fill="#5892c9"/><circle cx="1593.5" cy="1503.5" r="13.2" fill="#5892c9"/><circle cx="1687.3" cy="1503.5" r="17.8" fill="#5892c9"/><circle cx="1781.1" cy="1503.5" r="12.2" fill="#5892c9"/><circle cx="1874.9" cy="1503.5" r="9.8" fill="#5892c9"/><circle cx="1968.7" cy="1503.5" r="6.6" fill="#5892c9"/><circle cx="2062.5" cy="1503.5" r="10.5" fill="#5892c9"/><circle cx="2156.3" cy="1503.5" r="5.6" fill="#5892c9"/><circle cx="2250.1" cy="1503.5" r="3.5" fill="#5892c9"/><circle cx="2343.9" cy="1503.5" r="5.9" fill="#5892c9"/><circle cx="2437.7" cy="1503.5" r="7.7" fill="#5892c9"/><circle cx="280.3" cy="1564.8" r="3.5" fill="#5892c9"/><circle cx="374.1" cy="1564.8" r="3.5" fill="#5892c9"/><circle cx="467.9" cy="1564.8" r="11.8" fill="#5892c9"/><circle cx="561.7" cy="1564.8" r="5.6" fill="#5892c9"/><circle cx="655.5" cy="1564.8" r="2.8" fill="#5892c9"/><circle cx="749.3" cy="1564.8" r="10.5" fill="#5892c9"/><circle cx="843.1" cy="1564.8" r="10.5" fill="#5892c9"/><circle cx="936.9" cy="1564.8" r="14.6" fill="#5892c9"/><circle cx="1030.7" cy="1564.8" r="18.1" fill="#5892c9"/><circle cx="1124.5" cy="1564.8" r="8" fill="#5892c9"/><circle cx="1218.3" cy="1564.8" r="5.9" fill="#5892c9"/><circle cx="1312.1" cy="1564.8" r="12.9" fill="#5892c9"/><circle cx="1405.9" cy="1564.8" r="10.5" fill="#5892c9"/><circle cx="1499.7" cy="1564.8" r="20.9" fill="#5892c9"/><circle cx="1593.5" cy="1564.8" r="28.9" fill="#5892c9"/><circle cx="1687.3" cy="1564.8" r="13.2" fill="#5892c9"/><circle cx="1781.1" cy="1564.8" r="12.5" fill="#5892c9"/><circle cx="1874.9" cy="1564.8" r="9.8" fill="#5892c9"/><circle cx="1968.7" cy="1564.8" r="11.1" fill="#5892c9"/><circle cx="2062.5" cy="1564.8" r="7" fill="#5892c9"/><circle cx="2156.3" cy="1564.8" r="9.4" fill="#5892c9"/><circle cx="2250.1" cy="1564.8" r="10.5" fill="#5892c9"/><circle cx="2343.9" cy="1564.8" r="5.6" fill="#5892c9"/><circle cx="2437.7" cy="1564.8" r="5.2" fill="#5892c9"/><circle cx="280.3" cy="1626.1" r="9.8" fill="#5892c9"/><circle cx="374.1" cy="1626.1" r="8.4" fill="#5892c9"/><circle cx="467.9" cy="1626.1" r="16" fill="#5892c9"/><circle cx="561.7" cy="1626.1" r="7.7" fill="#5892c9"/><circle cx="655.5" cy="1626.1" r="12.9" fill="#5892c9"/><circle cx="749.3" cy="1626.1" r="11.1" fill="#5892c9"/><circle cx="843.1" cy="1626.1" r="2.4" fill="#5892c9"/><circle cx="936.9" cy="1626.1" r="5.6" fill="#5892c9"/><circle cx="1030.7" cy="1626.1" r="20.9" fill="#5892c9"/><circle cx="1124.5" cy="1626.1" r="5.2" fill="#5892c9"/><circle cx="1218.3" cy="1626.1" r="11.1" fill="#5892c9"/><circle cx="1312.1" cy="1626.1" r="28.9" fill="#5892c9"/><circle cx="1405.9" cy="1626.1" r="14.3" fill="#5892c9"/><circle cx="1499.7" cy="1626.1" r="3.8" fill="#5892c9"/><circle cx="1593.5" cy="1626.1" r="5.9" fill="#5892c9"/><circle cx="1687.3" cy="1626.1" r="14.6" fill="#5892c9"/><circle cx="1781.1" cy="1626.1" r="8.4" fill="#5892c9"/><circle cx="1874.9" cy="1626.1" r="2.1" fill="#5892c9"/><circle cx="1968.7" cy="1626.1" r="3.5" fill="#5892c9"/><circle cx="2062.5" cy="1626.1" r="3.5" fill="#5892c9"/><circle cx="2156.3" cy="1626.1" r="12.2" fill="#5892c9"/><circle cx="2250.1" cy="1626.1" r="4.9" fill="#5892c9"/><circle cx="2343.9" cy="1626.1" r="2.8" fill="#5892c9"/><circle cx="2437.7" cy="1626.1" r="6.6" fill="#5892c9"/><circle cx="280.3" cy="1687.5" r="5.2" fill="#5892c9"/><circle cx="374.1" cy="1687.5" r="6.3" fill="#5892c9"/><circle cx="467.9" cy="1687.5" r="7.3" fill="#5892c9"/><circle cx="561.7" cy="1687.5" r="29.6" fill="#5892c9"/><circle cx="655.5" cy="1687.5" r="13.9" fill="#5892c9"/><circle cx="749.3" cy="1687.5" r="7.7" fill="#5892c9"/><circle cx="843.1" cy="1687.5" r="15" fill="#5892c9"/><circle cx="936.9" cy="1687.5" r="5.6" fill="#5892c9"/><circle cx="1030.7" cy="1687.5" r="20.2" fill="#5892c9"/><circle cx="1124.5" cy="1687.5" r="26.1" fill="#5892c9"/><circle cx="1218.3" cy="1687.5" r="8.4" fill="#5892c9"/><circle cx="1312.1" cy="1687.5" r="5.6" fill="#5892c9"/><circle cx="1405.9" cy="1687.5" r="5.6" fill="#5892c9"/><circle cx="1499.7" cy="1687.5" r="14.6" fill="#5892c9"/><circle cx="1593.5" cy="1687.5" r="26.1" fill="#5892c9"/><circle cx="1687.3" cy="1687.5" r="5.6" fill="#5892c9"/><circle cx="1781.1" cy="1687.5" r="4.9" fill="#5892c9"/><circle cx="1874.9" cy="1687.5" r="2.1" fill="#5892c9"/><circle cx="1968.7" cy="1687.5" r="1.7" fill="#5892c9"/><circle cx="2156.3" cy="1687.5" r="4.9" fill="#5892c9"/><circle cx="2250.1" cy="1687.5" r="5.2" fill="#5892c9"/><circle cx="2343.9" cy="1687.5" r="2.8" fill="#5892c9"/><circle cx="2437.7" cy="1687.5" r="2.4" fill="#5892c9"/><polygon points="938.5,341.1 952.9,341.1 952.9,411.6 936.9,411.6 936.9,363.3 925.9,373.9 917.3,363.7" fill="#db943f"/><polygon points="959,341.1 1012.6,341.1 1012.6,347.6 986.6,411.6 968.9,411.6 992.1,355.5 959,355.5" fill="#db943f"/><polygon points="1539.8,341.1 1555.2,341.1 1555.2,411.6 1538.2,411.6 1538.2,363.3 1527.2,373.9 1518.6,363.7" fill="#c4503f"/><polygon points="1642.9,341.1 1657.3,341.1 1657.3,411.6 1641.3,411.6 1641.3,363.3 1630.3,373.9 1621.7,363.7" fill="#c4503f"/><path fill-rule="evenodd" fill="#c4503f" d="M1561.4,376.6 C1561.4,354.8 1573.0,340.3 1590.4,340.3 C1607.8,340.3 1619.4,354.8 1619.4,376.6 C1619.4,398.4 1607.8,412.9 1590.4,412.9 C1573.0,412.9 1561.4,398.4 1561.4,376.6Z M1577.2,376.6 C1577.2,362.8 1582.2,354.4 1590.4,354.4 C1598.6,354.4 1603.6,362.8 1603.6,376.6 C1603.6,390.4 1598.6,398.8 1590.4,398.8 C1582.2,398.8 1577.2,390.4 1577.2,376.6Z"/><g transform="translate(170,320) scale(0.148082)" fill="#fff"><path d="M55,215 C100,160 165,130 240,130 C350,130 430,190 430,285 C430,330 415,362 385,395 L255,520 L430,520 L430,620 L65,620 L65,510 L280,350 C305,330 315,310 315,290 C315,260 285,240 240,240 C190,240 150,260 120,290Z"/><path d="M55,215 C100,160 165,130 240,130 C350,130 430,190 430,285 C430,330 415,362 385,395 L255,520 L430,520 L430,620 L65,620 L65,510 L280,350 C305,330 315,310 315,290 C315,260 285,240 240,240 C190,240 150,260 120,290Z" transform="translate(405,0)"/><path d="M55,215 C100,160 165,130 240,130 C350,130 430,190 430,285 C430,330 415,362 385,395 L255,520 L430,520 L430,620 L65,620 L65,510 L280,350 C305,330 315,310 315,290 C315,260 285,240 240,240 C190,240 150,260 120,290Z" transform="translate(1790,0)"/><path d="M935,505 C975,505 1000,535 1000,575 C1000,630 970,680 925,715 L880,680 C905,660 920,640 925,622 C895,622 870,598 870,565 C870,530 898,505 935,505Z"/><path fill-rule="evenodd" d="M1205,135 L1355,135 L1355,425 L1420,425 L1420,525 L1355,525 L1355,620 L1245,620 L1245,525 L1020,525 L1020,440Z M1245,265 L1245,425 L1135,425Z"/><path fill-rule="evenodd" d="M1449,258 a178,128 0 1 0 356,0 a178,128 0 1 0 -356,0Z M1555,280 a72,45 0 1 0 144,0 a72,45 0 1 0 -144,0Z"/><path fill-rule="evenodd" d="M1430,482 a197,148 0 1 0 394,0 a197,148 0 1 0 -394,0Z M1545,478 a82,48 0 1 0 164,0 a82,48 0 1 0 -164,0Z"/></g><g transform="translate(2120,320) scale(0.087108)" fill="#86b6cc" stroke="#86b6cc" stroke-width="0"><path fill-rule="evenodd" d="M470,505 a327.5,280 0 1 0 655,0 a327.5,280 0 1 0 -655,0Z M655,505 a142.5,110 0 1 0 285,0 a142.5,110 0 1 0 -285,0Z"/><path fill="none" stroke-width="182" d="M1033,505 C1042,760 960,975 790,978 C700,980 610,950 548,905"/><path fill="none" stroke-width="170" d="M1222,416 C1270,345 1355,312 1465,312 C1600,312 1690,375 1690,465 C1690,570 1600,640 1470,640 L1350,640"/><path fill="none" stroke-width="170" d="M1470,640 C1610,640 1705,710 1705,815 C1705,920 1610,988 1460,988 C1350,988 1260,948 1208,882"/></g></svg>
<div style="position:absolute;top:950.5px;line-height:24px;font-size:17.86px;color:#e6e8eb;white-space:nowrap;right:1640.1px;-webkit-text-stroke:0.3px #e6e8eb;">1,000</div>
<div style="position:absolute;top:869.3px;line-height:24px;font-size:17.86px;color:#e6e8eb;white-space:nowrap;right:1640.1px;-webkit-text-stroke:0.3px #e6e8eb;">2,000</div>
<div style="position:absolute;top:786.5px;line-height:24px;font-size:17.86px;color:#e6e8eb;white-space:nowrap;right:1640.1px;-webkit-text-stroke:0.3px #e6e8eb;">3,000</div>
<div style="position:absolute;top:703.3px;line-height:24px;font-size:17.86px;color:#e6e8eb;white-space:nowrap;right:1640.1px;-webkit-text-stroke:0.3px #e6e8eb;">4,000</div>
<div style="position:absolute;top:622.2px;line-height:24px;font-size:17.86px;color:#e6e8eb;white-space:nowrap;right:1640.1px;-webkit-text-stroke:0.3px #e6e8eb;">5,000</div>
<div style="position:absolute;top:537.7px;line-height:24px;font-size:17.86px;color:#e6e8eb;white-space:nowrap;right:1640.1px;-webkit-text-stroke:0.3px #e6e8eb;">6,000</div>
<div style="position:absolute;top:1056.1px;line-height:22px;font-size:17.11px;color:#e6e8eb;white-space:nowrap;left:1005.3px;-webkit-text-stroke:0.3px #e6e8eb;">September</div>
<div style="position:absolute;top:1077.8px;line-height:22px;font-size:17.11px;color:#e6e8eb;white-space:nowrap;left:1005.3px;-webkit-text-stroke:0.3px #e6e8eb;">2016</div>
<div style="position:absolute;top:1056.1px;line-height:22px;font-size:17.11px;color:#e6e8eb;white-space:nowrap;left:1155.9px;-webkit-text-stroke:0.3px #e6e8eb;">November</div>
<div style="position:absolute;top:1056.1px;line-height:22px;font-size:17.11px;color:#e6e8eb;white-space:nowrap;left:1306.0px;-webkit-text-stroke:0.3px #e6e8eb;">January</div>
<div style="position:absolute;top:1077.8px;line-height:22px;font-size:17.11px;color:#e6e8eb;white-space:nowrap;left:1306.0px;-webkit-text-stroke:0.3px #e6e8eb;">2017</div>
<div style="position:absolute;top:1056.1px;line-height:22px;font-size:17.11px;color:#e6e8eb;white-space:nowrap;left:1451.8px;-webkit-text-stroke:0.3px #e6e8eb;">March</div>
<div style="position:absolute;top:1105.6px;line-height:22px;font-size:17.5px;color:#e6e8eb;white-space:nowrap;left:1228.8px;transform:translateX(-50%);-webkit-text-stroke:0.3px #e6e8eb;">_time</div>
<div style="position:absolute;left:1576.7px;top:740.5px;line-height:20px;font-size:15.35px;color:#e6e8eb;white-space:nowrap;-webkit-text-stroke:0.3px #e6e8eb">Chrome</div>
<div style="position:absolute;left:1576.7px;top:759.3px;line-height:20px;font-size:15.35px;color:#e6e8eb;white-space:nowrap;-webkit-text-stroke:0.3px #e6e8eb">Chro<span style="letter-spacing:-0.9px">...</span>obile</div>
<div style="position:absolute;left:1576.7px;top:778.1px;line-height:20px;font-size:15.35px;color:#e6e8eb;white-space:nowrap;-webkit-text-stroke:0.3px #e6e8eb">Chro<span style="letter-spacing:-0.9px">...</span>e iOS</div>
<div style="position:absolute;left:1576.7px;top:797.0px;line-height:20px;font-size:15.35px;color:#e6e8eb;white-space:nowrap;-webkit-text-stroke:0.3px #e6e8eb">Firefox</div>
<div style="position:absolute;left:1576.7px;top:815.8px;line-height:20px;font-size:15.35px;color:#e6e8eb;white-space:nowrap;-webkit-text-stroke:0.3px #e6e8eb">Firef<span style="letter-spacing:-0.9px">...</span>obile</div>
<div style="position:absolute;left:1576.7px;top:834.6px;line-height:20px;font-size:15.35px;color:#e6e8eb;white-space:nowrap;-webkit-text-stroke:0.3px #e6e8eb">Mobi<span style="letter-spacing:-0.9px">...</span>afari</div>
<div style="position:absolute;left:1576.7px;top:853.4px;line-height:20px;font-size:15.35px;color:#e6e8eb;white-space:nowrap;-webkit-text-stroke:0.3px #e6e8eb">Mobi<span style="letter-spacing:-0.9px">...</span>View</div>
<div style="position:absolute;left:1576.7px;top:872.2px;line-height:20px;font-size:15.35px;color:#e6e8eb;white-space:nowrap;-webkit-text-stroke:0.3px #e6e8eb">Opera</div>
<div style="position:absolute;left:1576.7px;top:891.1px;line-height:20px;font-size:15.35px;color:#e6e8eb;white-space:nowrap;-webkit-text-stroke:0.3px #e6e8eb">Safari</div>
<div style="position:absolute;left:1576.7px;top:909.9px;line-height:20px;font-size:15.35px;color:#e6e8eb;white-space:nowrap;-webkit-text-stroke:0.3px #e6e8eb">Sams<span style="letter-spacing:-0.9px">...</span>ernet</div>
<div style="position:absolute;left:1576.7px;top:928.7px;line-height:20px;font-size:15.35px;color:#e6e8eb;white-space:nowrap;-webkit-text-stroke:0.3px #e6e8eb">OTHER</div>
<div style="position:absolute;top:537.8px;line-height:24px;font-size:17.86px;color:#e6e8eb;white-space:nowrap;right:777.6px;-webkit-text-stroke:0.3px #e6e8eb;">6,000</div>
<div style="position:absolute;top:639.5px;line-height:24px;font-size:17.86px;color:#e6e8eb;white-space:nowrap;right:777.6px;-webkit-text-stroke:0.3px #e6e8eb;">5,000</div>
<div style="position:absolute;top:738.3px;line-height:24px;font-size:17.86px;color:#e6e8eb;white-space:nowrap;right:777.6px;-webkit-text-stroke:0.3px #e6e8eb;">4,000</div>
<div style="position:absolute;top:838.3px;line-height:24px;font-size:17.86px;color:#e6e8eb;white-space:nowrap;right:777.6px;-webkit-text-stroke:0.3px #e6e8eb;">3,000</div>
<div style="position:absolute;top:937.0px;line-height:24px;font-size:17.86px;color:#e6e8eb;white-space:nowrap;right:777.6px;-webkit-text-stroke:0.3px #e6e8eb;">2,000</div>
<div style="position:absolute;top:1049.0px;line-height:22px;font-size:17.16px;color:#e6e8eb;white-space:nowrap;left:1843.2px;transform:translateX(-50%);-webkit-text-stroke:0.3px #e6e8eb;">friday</div>
<div style="position:absolute;top:1049.0px;line-height:22px;font-size:17.16px;color:#e6e8eb;white-space:nowrap;left:1946.9px;transform:translateX(-50%);-webkit-text-stroke:0.3px #e6e8eb;">monday</div>
<div style="position:absolute;top:1049.0px;line-height:22px;font-size:17.16px;color:#e6e8eb;white-space:nowrap;left:2051.0px;transform:translateX(-50%);-webkit-text-stroke:0.3px #e6e8eb;">saturday</div>
<div style="position:absolute;top:1049.0px;line-height:22px;font-size:17.16px;color:#e6e8eb;white-space:nowrap;left:2154.3px;transform:translateX(-50%);-webkit-text-stroke:0.3px #e6e8eb;">sunday</div>
<div style="position:absolute;top:1049.0px;line-height:22px;font-size:17.16px;color:#e6e8eb;white-space:nowrap;left:2257.6px;transform:translateX(-50%);-webkit-text-stroke:0.3px #e6e8eb;">thursday</div>
<div style="position:absolute;top:1049.0px;line-height:22px;font-size:17.16px;color:#e6e8eb;white-space:nowrap;left:2360.8px;transform:translateX(-50%);-webkit-text-stroke:0.3px #e6e8eb;">tuesday</div>
<div style="position:absolute;top:1049.0px;line-height:22px;font-size:17.16px;color:#e6e8eb;white-space:nowrap;left:2464.5px;transform:translateX(-50%);-webkit-text-stroke:0.3px #e6e8eb;">wednesday</div>
<div style="position:absolute;top:1077.2px;line-height:24px;font-size:18.23px;color:#e6e8eb;white-space:nowrap;left:2153.9px;transform:translateX(-50%);-webkit-text-stroke:0.3px #e6e8eb;">Day of Week</div>
<div style="position:absolute;left:1726.4px;top:797.6px;font-size:18.18px;line-height:22px;color:#e6e8eb;white-space:nowrap;transform:translate(-50%,-50%) rotate(-90deg)">Games</div>
<div style="position:absolute;top:1228.2px;line-height:20px;font-size:14.85px;color:#666666;white-space:nowrap;left:280.6px;transform:translateX(-50%);letter-spacing:0.6px;">12AM</div>
<div style="position:absolute;top:1228.2px;line-height:20px;font-size:14.85px;color:#666666;white-space:nowrap;left:374.4px;transform:translateX(-50%);letter-spacing:0.6px;">1AM</div>
<div style="position:absolute;top:1228.2px;line-height:20px;font-size:14.85px;color:#666666;white-space:nowrap;left:468.2px;transform:translateX(-50%);letter-spacing:0.6px;">2AM</div>
<div style="position:absolute;top:1228.2px;line-height:20px;font-size:14.85px;color:#666666;white-space:nowrap;left:562.0px;transform:translateX(-50%);letter-spacing:0.6px;">3AM</div>
<div style="position:absolute;top:1228.2px;line-height:20px;font-size:14.85px;color:#666666;white-space:nowrap;left:655.8px;transform:translateX(-50%);letter-spacing:0.6px;">4AM</div>
<div style="position:absolute;top:1228.2px;line-height:20px;font-size:14.85px;color:#666666;white-space:nowrap;left:749.6px;transform:translateX(-50%);letter-spacing:0.6px;">5AM</div>
<div style="position:absolute;top:1228.2px;line-height:20px;font-size:14.85px;color:#666666;white-space:nowrap;left:843.4px;transform:translateX(-50%);letter-spacing:0.6px;">6AM</div>
<div style="position:absolute;top:1228.2px;line-height:20px;font-size:14.85px;color:#666666;white-space:nowrap;left:937.2px;transform:translateX(-50%);letter-spacing:0.6px;">7AM</div>
<div style="position:absolute;top:1228.2px;line-height:20px;font-size:14.85px;color:#666666;white-space:nowrap;left:1031.0px;transform:translateX(-50%);letter-spacing:0.6px;">8AM</div>
<div style="position:absolute;top:1228.2px;line-height:20px;font-size:14.85px;color:#666666;white-space:nowrap;left:1124.8px;transform:translateX(-50%);letter-spacing:0.6px;">9AM</div>
<div style="position:absolute;top:1228.2px;line-height:20px;font-size:14.85px;color:#666666;white-space:nowrap;left:1218.6px;transform:translateX(-50%);letter-spacing:0.6px;">10AM</div>
<div style="position:absolute;top:1228.2px;line-height:20px;font-size:14.85px;color:#666666;white-space:nowrap;left:1312.4px;transform:translateX(-50%);letter-spacing:0.6px;">11AM</div>
<div style="position:absolute;top:1228.2px;line-height:20px;font-size:14.85px;color:#666666;white-space:nowrap;left:1406.2px;transform:translateX(-50%);letter-spacing:0.6px;">12PM</div>
<div style="position:absolute;top:1228.2px;line-height:20px;font-size:14.85px;color:#666666;white-space:nowrap;left:1500.0px;transform:translateX(-50%);letter-spacing:0.6px;">1PM</div>
<div style="position:absolute;top:1228.2px;line-height:20px;font-size:14.85px;color:#666666;white-space:nowrap;left:1593.8px;transform:translateX(-50%);letter-spacing:0.6px;">2PM</div>
<div style="position:absolute;top:1228.2px;line-height:20px;font-size:14.85px;color:#666666;white-space:nowrap;left:1687.6px;transform:translateX(-50%);letter-spacing:0.6px;">3PM</div>
<div style="position:absolute;top:1228.2px;line-height:20px;font-size:14.85px;color:#666666;white-space:nowrap;left:1781.4px;transform:translateX(-50%);letter-spacing:0.6px;">4PM</div>
<div style="position:absolute;top:1228.2px;line-height:20px;font-size:14.85px;color:#666666;white-space:nowrap;left:1875.2px;transform:translateX(-50%);letter-spacing:0.6px;">5PM</div>
<div style="position:absolute;top:1228.2px;line-height:20px;font-size:14.85px;color:#666666;white-space:nowrap;left:1969.0px;transform:translateX(-50%);letter-spacing:0.6px;">6PM</div>
<div style="position:absolute;top:1228.2px;line-height:20px;font-size:14.85px;color:#666666;white-space:nowrap;left:2062.8px;transform:translateX(-50%);letter-spacing:0.6px;">7PM</div>
<div style="position:absolute;top:1228.2px;line-height:20px;font-size:14.85px;color:#666666;white-space:nowrap;left:2156.6px;transform:translateX(-50%);letter-spacing:0.6px;">8PM</div>
<div style="position:absolute;top:1228.2px;line-height:20px;font-size:14.85px;color:#666666;white-space:nowrap;left:2250.4px;transform:translateX(-50%);letter-spacing:0.6px;">9PM</div>
<div style="position:absolute;top:1228.2px;line-height:20px;font-size:14.85px;color:#666666;white-space:nowrap;left:2344.2px;transform:translateX(-50%);letter-spacing:0.6px;">10PM</div>
<div style="position:absolute;top:1228.2px;line-height:20px;font-size:14.85px;color:#666666;white-space:nowrap;left:2438.0px;transform:translateX(-50%);letter-spacing:0.6px;">11PM</div>
<div style="position:absolute;top:1308.5px;line-height:24px;font-size:18px;color:#666666;white-space:nowrap;left:77.0px;letter-spacing:1.15px;">monday</div>
<div style="position:absolute;top:1369.8px;line-height:24px;font-size:18px;color:#666666;white-space:nowrap;left:77.0px;letter-spacing:1.15px;">tuesday</div>
<div style="position:absolute;top:1431.2px;line-height:24px;font-size:18px;color:#666666;white-space:nowrap;left:77.0px;letter-spacing:1.15px;">wednesday</div>
<div style="position:absolute;top:1492.5px;line-height:24px;font-size:18px;color:#666666;white-space:nowrap;left:77.0px;letter-spacing:1.15px;">thursday</div>
<div style="position:absolute;top:1553.8px;line-height:24px;font-size:18px;color:#666666;white-space:nowrap;left:77.0px;letter-spacing:1.15px;">friday</div>
<div style="position:absolute;top:1615.1px;line-height:24px;font-size:18px;color:#666666;white-space:nowrap;left:77.0px;letter-spacing:1.15px;">saturday</div>
<div style="position:absolute;top:1676.5px;line-height:24px;font-size:18px;color:#666666;white-space:nowrap;left:77.0px;letter-spacing:1.15px;">sunday</div>
</body></html>
